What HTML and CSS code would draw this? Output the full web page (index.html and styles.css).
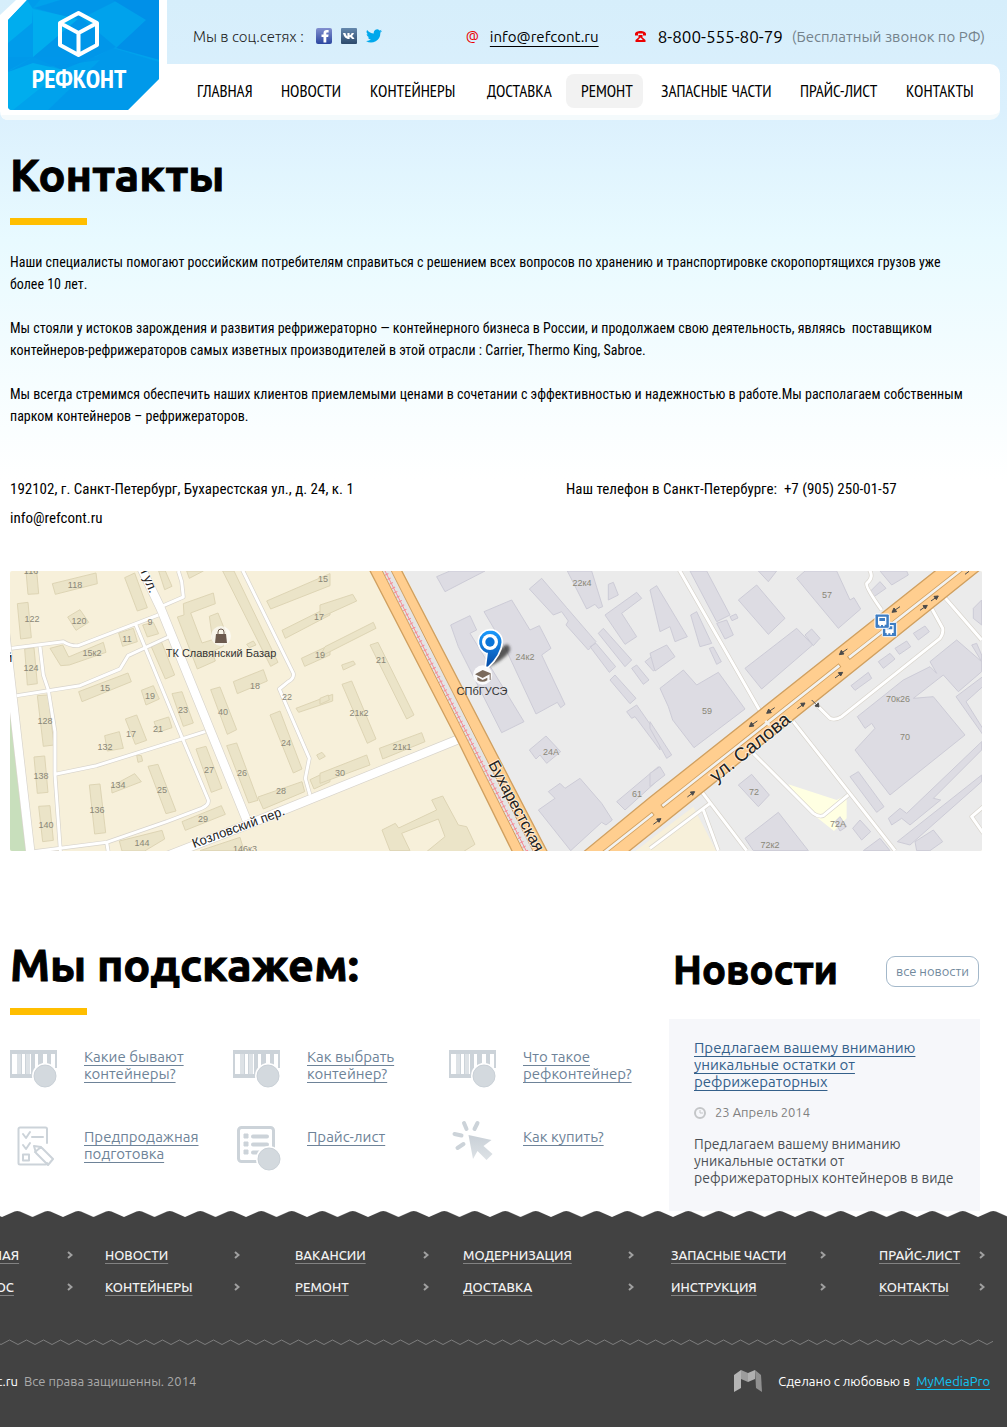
FILE: index.html
```html
<!DOCTYPE html>
<html lang="ru">
<head>
<meta charset="utf-8">
<meta name="viewport" content="width=device-width, initial-scale=1">
<title>Контакты — Рефконт</title>
<link rel="stylesheet" href="styles.css">
</head>
<body>

<svg class="sprite" width="0" height="0" aria-hidden="true">
  <defs>
    <linearGradient id="gray" x1="0" y1="0" x2="0" y2="1"><stop offset="0" stop-color="#c9d0d7"/><stop offset="1" stop-color="#dde2e6"/></linearGradient>
    <linearGradient id="fb" x1="0" y1="0" x2="0" y2="1"><stop offset="0" stop-color="#8290cf"/><stop offset="1" stop-color="#2b46a0"/></linearGradient>
    <linearGradient id="vk" x1="0" y1="0" x2="0" y2="1"><stop offset="0" stop-color="#6488ad"/><stop offset="1" stop-color="#2c4a6c"/></linearGradient>
    <linearGradient id="pin" x1="0" y1="0" x2="0" y2="1"><stop offset="0" stop-color="#1a9cff"/><stop offset="1" stop-color="#0549a4"/></linearGradient>
    <filter id="soft" x="-50%" y="-50%" width="200%" height="200%"><feGaussianBlur stdDeviation="5"/></filter>
  </defs>
  <symbol id="container" viewBox="0 0 47 38">
    <path fill="#ccd3d9" d="M0 0h47v18h-2V4h-4v12h-4V4h-4v9l-5 4V4h-3v22l-2 2H0zM2 4v20h5V4zM12 4v20h3V4zM20 4v20h1V4z" fill-rule="evenodd"/>
    <path fill="#dde2e6" d="M7 4h4v20H7zM16 4h4v20h-4z"/>
    <circle cx="35" cy="26" r="13" fill="#fff"/>
    <circle cx="35" cy="26" r="11" fill="#d3d9de" stroke="#c9d0d7"/>
  </symbol>
  <symbol id="checklist" viewBox="0 0 38 40">
    <g fill="none" stroke="#ccd3d9" stroke-width="2" stroke-linejoin="round" stroke-linecap="round">
      <path d="M30 17V3a1.500 1.500 0 0 0-1.500-1.500H3A1.500 1.500 0 0 0 1.500 3v34A1.500 1.500 0 0 0 3 38.500h25.500A1.500 1.500 0 0 0 30 37"/>
      <path d="M15 11h11M6 8l3 4 4-6M6 19l3 4 4-6M6 28.500h6v6H6z" />
      <path d="M17 20l7 1 12 12-5 6-12-12zM18 26l6-5"/>
    </g>
  </symbol>
  <symbol id="pricelist" viewBox="0 0 44 45">
    <rect x="1.500" y="1.500" width="35" height="34" rx="3" fill="none" stroke="#ccd3d9" stroke-width="3"/>
    <path d="M16 10.500h14M16 18.500h14M16 26.500h8" stroke="#ccd3d9" stroke-width="4" stroke-linecap="round"/>
    <path d="M7 8h4v4H7zM7 16h4v4H7zM7 24h4v4H7z" fill="#ccd3d9" stroke="#ccd3d9"/>
    <circle cx="32" cy="33" r="13" fill="#fff"/>
    <circle cx="32" cy="33" r="11" fill="#d3d9de" stroke="#c9d0d7"/>
  </symbol>
  <symbol id="click" viewBox="0 0 42 40">
    <path d="M16.500 15l23 5-8 6 9 8-6 6-9-9-4.500 8z" fill="url(#gray)"/>
    <path d="M12 3l2.500 6M25.500 3l-3 6M2.500 14l7 1.500M5.500 28l6-4" stroke="#ccd3d9" stroke-width="4" stroke-linecap="round"/>
  </symbol>
  <symbol id="chevron" viewBox="0 0 6 8"><path d="M1 1l3.500 3L1 7" fill="none" stroke="#a0a0a0" stroke-width="2"/></symbol>
</svg>

<div class="page">
  <header class="header">
    <a class="logo" href="#" aria-label="Рефконт">
      <svg class="logo-art" viewBox="0 0 167 120" aria-hidden="true">
        <path d="M16 0h151v120H9q-9 0-9-9V15z" fill="#fff"/>
        <path d="M1 115h166v5H9q-6 0-8-5z" fill="#f4fafc"/>
        <clipPath id="badge"><path d="M27 0h132v79l-31 31H12q-4 0-4-4V20z"/></clipPath>
        <g clip-path="url(#badge)">
          <path fill="#00a2ec" d="M0 0h167v120H0z"/>
          <path fill="#0090e8" d="M24 0l8 9 8-9zM8 20l25-11v48H8z" opacity=".3"/>
          <path fill="#0094e9" d="M34 8L60 0h58L78 20zM33 57L55 30l24-14 37 31-22 10-32 13z" opacity=".8"/>
          <path fill="#0090e8" d="M113 0h54v62l-51-14 30-28z"/>
          <path fill="#0096ea" d="M8 57h25l-25 14zM8 72l25-15 62 0 18-9 46 14v17l-31 31H48l52-50z" opacity=".7"/>
          <path fill="#00adee" d="M8 20L27 0l6 9-1 14-24 20zM33 9l45 10-45 38zM8 72l25-9 30 7-50 40H8z"/>
        </g>
        <g fill="none" stroke="#fff" stroke-width="4" stroke-linejoin="round">
          <path d="M78.500 13L97 23v22L78.500 55 60 45V23zM60 23l18.500 10L97 23M78.500 33v22"/>
        </g>
      </svg>
      <span class="logo-name">РЕФКОНТ</span>
    </a>
    <div class="header-body">
      <div class="topline">
        <span class="social-label">Мы в соц.сетях :</span>
        <span class="social">
          <a href="#" aria-label="Facebook"><svg width="16" height="16" viewBox="0 0 16 16"><rect width="16" height="16" rx="2" fill="url(#fb)"/><path fill="#fff" d="M7.500 14.500V9H5.500V6.500h2V5.200C7.500 3 8.800 2 10.600 2h2v2.400h-1.300c-.8 0-1 .4-1 1v1.100h2.300L12.200 9h-1.900v5.500z"/></svg></a>
          <a href="#" aria-label="ВКонтакте"><svg width="16" height="16" viewBox="0 0 16 16"><rect width="16" height="16" rx="1" fill="url(#vk)"/><path fill="#fff" d="M2 5h2.400c.5 1.700 1.300 3 2 3.400V5h2.200v2.300C9.600 7 10.200 6 10.700 5H13c-.4 1.200-1.200 2.300-2 3 1 .6 1.900 1.600 2.500 3H11c-.5-1-1.300-1.800-2.400-2v2H8C5 11 2.800 8.800 2 5z"/></svg></a>
          <a href="#" aria-label="Twitter"><svg width="16" height="14" viewBox="0 0 24 20"><path fill="#00a8ec" d="M24 2.400a10 10 0 0 1-2.800.8A5 5 0 0 0 23.300.5a10 10 0 0 1-3.100 1.200 4.900 4.900 0 0 0-8.400 4.500A14 14 0 0 1 1.700 1a4.900 4.900 0 0 0 1.500 6.600 5 5 0 0 1-2.200-.6c0 2.300 1.600 4.400 3.900 4.900a5 5 0 0 1-2.200.1 4.900 4.900 0 0 0 4.600 3.400A10 10 0 0 1 0 17.500a14 14 0 0 0 21.500-12.600A10 10 0 0 0 24 2.400z"/></svg></a>
        </span>
        <span class="at">@</span>
        <a class="mail" href="mailto:info@refcont.ru">info@refcont.ru</a>
        <svg class="phone-icon" width="11" height="11" viewBox="0 0 22 22" aria-hidden="true"><path fill="#ec0000" fill-rule="evenodd" d="M0 6c0-8 22-8 22 0v3h-6V5H6v4H0zM1 22v-4l6-5V8h8v5l6 5v4zm6-4h8v-1l-4-4-4 4z"/></svg>
        <a class="phone" href="tel:88005558079">8-800-555-80-79</a>
        <span class="free">(Бесплатный звонок по РФ)</span>
      </div>
      <nav class="nav">
        <a href="#">ГЛАВНАЯ</a>
        <a href="#">НОВОСТИ</a>
        <a href="#">КОНТЕЙНЕРЫ</a>
        <a href="#">ДОСТАВКА</a>
        <a class="active" href="#">РЕМОНТ</a>
        <a href="#">ЗАПАСНЫЕ ЧАСТИ</a>
        <a href="#">ПРАЙС-ЛИСТ</a>
        <a href="#">КОНТАКТЫ</a>
      </nav>
    </div>
  </header>

  <main class="main">
    <h1 class="title">Контакты</h1>
    <div class="intro">
      <p>Наши специалисты помогают российским потребителям справиться с решением всех вопросов по хранению и транспортировке скоропортящихся грузов уже<br>более 10 лет.</p>
      <p>Мы стояли у истоков зарождения и развития рефрижераторно — контейнерного бизнеса в России, и продолжаем свою деятельность, являясь &nbsp;поставщиком<br>контейнеров-рефрижераторов самых изветных производителей в этой отрасли : Carrier, Thermo King, Sabroe.</p>
      <p>Мы всегда стремимся обеспечить наших клиентов приемлемыми ценами в сочетании с эффективностью и надежностью в работе.Мы располагаем собственным<br>парком контейнеров – рефрижераторов.</p>
    </div>
    <address class="contacts">
      <div class="contacts-col">
        <span>192102, г. Санкт-Петербург, Бухарестская ул., д. 24, к. 1</span>
        <a class="contacts-mail" href="mailto:info@refcont.ru">info@refcont.ru</a>
      </div>
      <div class="contacts-col">
        <span>Наш телефон в Санкт-Петербурге: &nbsp;+7 (905) 250-01-57</span>
      </div>
    </address>

    <svg class="map" viewBox="0 0 972 280" preserveAspectRatio="xMidYMid slice" role="img" aria-label="Карта проезда">
      <rect width="972" height="280" fill="#f7f0da"/>
      <!-- west district -->
      <g transform="translate(-10 -6) scale(.33333)">
        <path fill="#c8dfbc" d="M30 440L52 640 78 860H30z"/>
        <path class="house" d="M78 18h32l6 68-32 2zM157 56l131-32 4 32-126 32zM203 156l37-22 26 38-38 24zM52 116l32-4 10 106-32 4zM74 252l28-4 10 108-30 4zM112 392l32-2 18 150-32 4zM102 576l32-3 10 109-32 3zM116 724l34-2 10 104-32 4zM268 660l32-3 17 146-33 4zM334 664l70-38 20 24-88 34zM314 512l44-12 12 50-48 8zM236 380l148-56 10 26-148 60zM150 250l38-10 18 36 104-44 8 30-110 38-26 2zM356 204l44-14 12 40-44 14zM428 180l32-8 16 34-34 10zM374 38l30-14 38 104-30 10zM376 462l34-12 30 76-34 12zM424 376l36-14 18 40-40 18zM462 470l44-14 10 32-42 14zM516 386l30-6 34 94-30 10zM450 236l34-6 40 100-28 12zM588 552l30-8 48 126-32 12zM444 604l30-6 54 140-30 8zM546 770l118-48 12 26-120 48zM358 828l128-32 8 26-60 36h-68zM774 696l132-46 8 30-124 52zM680 542l30-8 64 172-28 8zM632 374l28-8 50 128-28 14zM700 350l90-36 12 34-90 38zM532 156l20-6-2-34 90-32 6 32-74 28 34 90 32-10-10-70 26-10 24 60-8 40-34 16 10 28-54 24zM810 450l30-12 66 174-26 12zM888 430l110-42v20l-102 34zM800 108L990 26v36L812 132zM846 196l144-72v26L856 220zM904 280l86-40v30l-76 34zM668 18h34l132 274-22 12zM930 644l60-28v34l-48 22zM476 18h20l20 46-22 10zM560 18h50l-42 22zM950 570l16-8 10 12-18 10zM740 238l20-10 8 12-20 8zM410 570l14 2 4 16-14 4zM600 857l120-40 12 40z"/>
        <g class="road-edge">
          <path d="M35 250l155-20q25 15 45 12l240-92M490 122l60-26-5-46-10-32M50 392l190-30 120-50 24-40 121-56M120 245l10 85 15 45 20 125v130l17 240M407 178l141 344 77 183q3 15-20 25l-105 40-180 62-220 28M165 628l125-26 255-80 70-22M320 832l5 30M725 10l155 315q3 15-15 25l-27 22 90 208-12 60 14 50"/>
          <path class="wide" d="M410 -20L482 130 740 765M15 200L92 870M470 885L740 780l630-255"/>
        </g>
        <g class="road">
          <path d="M35 250l155-20q25 15 45 12l240-92M490 122l60-26-5-46-10-32M50 392l190-30 120-50 24-40 121-56M120 245l10 85 15 45 20 125v130l17 240M407 178l141 344 77 183q3 15-20 25l-105 40-180 62-220 28M165 628l125-26 255-80 70-22M320 832l5 30M725 10l155 315q3 15-15 25l-27 22 90 208-12 60 14 50"/>
          <path class="wide" d="M410 -20L482 130 740 765M15 200L92 870M470 885L740 780l630-255"/>
        </g>
      </g>
      <!-- industrial zone -->
      <g transform="translate(310 -6) scale(.33333)">
        <path fill="#ebebeb" d="M240 0h1760v870H680z"/>
        <path class="house" d="M0 120l98-32 12 20L0 158zM15 245l145-73 8 18L0 275zM150 240l24-8 108 218-22 12zM65 300l35-12 6 10-36 17zM66 358l29-10 73 174-26 13zM178 550l127-47 10 27-127 52zM0 625l140-55 10 30L0 655zM0 400l25-10 3 15-28 13zM186 795l40-20 10 14 114-54-15-30 33-12 47 87 25 5 25 53-35 22H320l55-45-20-53-110 43 25 52h-60z"/>
        <path class="plant" d="M350 35l40-17h105L375 80zM628 72l37-32 75 88 88 102-23 25-67-75 7-12-20-28-25 10zM742 18h73l33 107-13 5-10-12-25 14zM865 58l15-6 15 38-30 15zM855 150l95-68 15 18-60 45 45 70-35 23zM835 205l15-15 85 95-20 20zM810 245l18-10 59 70-19 17zM975 290l45-35v45l-20 18zM935 310l15-10 37 45-17 13zM870 345l15-15 63 70-18 16zM920 440l30-20 70 100v35l-75-100-10 5zM890 710l125-105 5 35-105 95zM492 140l83-35 55 90 28-13 35 68-28 20 70 148-13 10-10-16-64 35-93-200zM392 180l58-28 20 43-20 10 162 265-67 33L415 245zM628 555l50-42 44 47-42 35-20-25-12 12zM655 735l50-35-20-20 35-25 15 15 45-30 65 75 32 50-19 15-13-8-93 85z"/>
      </g>
      <g transform="translate(640 -6) scale(.33333)">
        <path fill="#f7f0da" d="M-60 870L130 725l75 145z"/>
        <path fill="#ffffe2" d="M415 658l145 47 30-15v70l-38 38-67-53z"/>
        <path class="plant" d="M0 75l20-13 92 153-37 15-15-45-30 15zM120 18h50l70 132-40 20zM122 150l18-10 45 95-35 10zM200 175l30-10 20 45-25 12zM240 155l18-8 6 12-18 8zM265 105l55-45 85 100-50 48zM440 40l25-22h95l40 87 12-7 20 34-67 58zM690 18h80l5 12-50 30zM660 80l30-30 18 20-36 25zM285 310l155-120 48 50-153 132zM465 210l20-18 25 28-20 22zM30 370l70-55 40 45 65-38 80 110-153 116-64-83-13-40zM0 265l50-25 25 35-60 43zM178 250l12-4 24 44-14 8zM0 470l65 100-15 10L0 490zM0 625l30-20 15 25-45 35zM265 660l40-32 53 62-33 35zM285 820l100-78 90 115H310zM790 205l35-22 13 17-33 25zM735 250l35-22 12 17-34 23zM685 290l35-25 15 17-35 28zM603 362l52-40 10 18-50 36zM622 455L760 345l80-40 20 20-20-35 80-65 75 65v30l-70 60-45-50-90 70 60-5 95 115-225 180-105-135 60-65-10-15-20 15zM600 635l25-15 77 105-22 17zM715 760l35-30 20 15 225-215v25L850 700l22 5-92 75-25-20-30 20zM742 830l253-200v20L780 840zM795 830l55-35 28 35-38 27h-40zM608 790l22-25 32 35-27 25zM555 770l15-15 20 30-20 13zM970 130l25-25v75l-25-20zM965 240l15-5 15 35v20zM640 857l50-37 30 37zM325 18h55l-25 32zM918 395l80-60v30l-50 45 50 80v18z"/>
        <path class="road-edge" d="M85 10l245 428M155 680l135 177M430 470l305 387M310 565l180 180q15 12 30 7l75-62M885 98l110 127M845 130l33 60q3 15-8 30L575 455q-20 12-35 5l-55-55M655 10q20 25-5 45-5 10 45 80M0 850l180-135M160 735l45 122M1000 725l-35 30 35 50"/>
        <path class="road" d="M85 10l245 428M155 680l135 177M430 470l305 387M310 565l180 180q15 12 30 7l75-62M885 98l110 127M845 130l33 60q3 15-8 30L575 455q-20 12-35 5l-55-55M655 10q20 25-5 45-5 10 45 80M0 850l180-135M160 735l45 122M1000 725l-35 30 35 50"/>
        <path class="highway" d="M-195 857L0 697 878 0h130L-80 872h-130z"/>
        <path d="M35 725L570 300M595 280L945 5M-150 872L10 745" stroke="#d0a060" stroke-width="13" fill="none"/>
        <path d="M37 723L568 302M597 278L945 5M-150 872L8 747M346 468l12 12" stroke="#f2f2f0" stroke-width="8" fill="none"/>
        <g stroke="#4b4b4b" stroke-width="3" fill="#4b4b4b">
          <path d="M750 125l-22 15M732 129l-6 13 14-2zM592 252l-22 15M574 256l-6 13 14-2zM374 428l-22 15M356 432l-6 13 14-2zM322 468l-22 15M304 472l-6 13 14-2z"/>
          <path d="M810 136l20-14M819 122l13-1-6 11zM843 108l20-14M852 94l13-1-6 11zM945 28l12-9M555 339l22-16M565 323l13-1-6 11zM442 431l22-16M452 415l13-1-6 11zM112 696l20-15M121 681l13-1-6 11zM10 778l22-16M20 762l13-1-6 11zM485 405l20 20M505 414l2 12-12-3z"/>
        </g>
        <g>
          <rect x="697" y="172" width="43" height="43" rx="4" fill="#3e7dc3" stroke="#fff" stroke-width="3"/>
          <path fill="#fff" fill-rule="evenodd" d="M706 180h25v24h-5v5h-5v-4h-6v4h-5v-5h-4zm4 4v9h17v-9z"/>
          <rect x="675" y="147" width="43" height="43" rx="4" fill="#3e7dc3" stroke="#fff" stroke-width="3"/>
          <path fill="#fff" fill-rule="evenodd" d="M684 155h25v24h-5v5h-5v-4h-6v4h-5v-5h-4zm4 4v9h17v-9z"/>
        </g>
      </g>
      <g transform="translate(310 -6) scale(.33333)">
        <path class="highway" d="M141 0h95l452 872H583L412 525z"/>
        <path fill="#e4e4e4" stroke="#d0a060" stroke-width="3" d="M178 0h27l441 872h-29z"/>
        <path d="M186 0l440 872" stroke="#f58c96" stroke-width="3" fill="none"/>
        <path d="M186 0l440 872" stroke="#f58c96" stroke-width="11" stroke-dasharray="3 12" fill="none"/>
        <path d="M500 308l30-50 30-20q22 12-4 36-24 22-56 34z" fill="#333" opacity=".8" filter="url(#soft)"/>
        <circle cx="488" cy="330" r="29" fill="#fff" opacity=".85"/>
        <path fill="#7a6a5c" d="M465 328l23-13 24 10v20h-3v-17l-21 11zM472 336l16 9 14-7v8q-14 9-30 0z"/>
        <path d="M510 194a37 37 0 0 0-10 72l1 0-5 40 8 2q40-38 43-76a37 37 0 0 0-37-38z" fill="url(#pin)" stroke="#fff" stroke-width="5"/>
        <circle cx="510" cy="231" r="24" fill="#fff"/>
        <circle cx="510" cy="231" r="14" fill="#0a74d8"/>
      </g>
      <g transform="translate(-10 -571)">
        <circle cx="221" cy="636" r="10" fill="#fff" opacity=".6"/>
        <path d="M216 634h10l1 9h-12z" fill="#6c5a4e"/><path d="M218 635v-3a3 3 0 0 1 6 0v3" fill="none" stroke="#6c5a4e"/>
        <g class="num">
          <text x="31" y="574">116</text><text x="75" y="588">118</text><text x="32" y="622">122</text><text x="79" y="624">120</text><text x="150" y="625">9</text><text x="127" y="642">11</text><text x="92" y="656">15к2</text><text x="31" y="671">124</text><text x="105" y="691">15</text><text x="150" y="699">19</text><text x="183" y="713">23</text><text x="223" y="715">40</text><text x="255" y="689">18</text><text x="287" y="700">22</text><text x="45" y="724">128</text><text x="131" y="737">17</text><text x="158" y="732">21</text><text x="105" y="750">132</text><text x="286" y="746">24</text><text x="209" y="773">27</text><text x="242" y="776">26</text><text x="41" y="779">138</text><text x="118" y="788">134</text><text x="162" y="793">25</text><text x="281" y="794">28</text><text x="97" y="813">136</text><text x="203" y="822">29</text><text x="46" y="828">140</text><text x="142" y="846">144</text><text x="245" y="852">146к3</text><text x="323" y="582">15</text><text x="319" y="620">17</text><text x="320" y="658">19</text><text x="381" y="663">21</text><text x="359" y="716">21к2</text><text x="402" y="750">21к1</text><text x="340" y="776">30</text><text x="582" y="586">22к4</text><text x="525" y="660">24к2</text><text x="551" y="755">24А</text><text x="637" y="797">61</text><text x="827" y="598">57</text><text x="707" y="714">59</text><text x="898" y="702">70к26</text><text x="905" y="740">70</text><text x="754" y="795">72</text><text x="838" y="827">72А</text><text x="770" y="848">72к2</text>
        </g>
        <g class="place"><text x="221" y="657">ТК Славянский Базар</text><text x="482" y="695">СПбГУСЭ</text></g>
        <g class="street">
          <text class="s13" transform="translate(139 568) rotate(67)">я ул.</text>
          <text class="s13" transform="translate(194 848) rotate(-20)">Козловский пер.</text>
          <text class="s16" transform="translate(488 764) rotate(62)">Бухарестская</text>
          <text class="s19" transform="translate(716 783) rotate(-39)">ул. Салова</text>
          <text class="s13" x="5" y="662">й</text>
        </g>
      </g>
    </svg>

    <div class="columns">
      <section class="advice">
        <h2 class="title">Мы подскажем:</h2>
        <ul class="advice-list">
          <li><span class="pic"><svg width="47" height="38"><use href="#container"/></svg></span><a href="#">Какие бывают<br>контейнеры?</a></li>
          <li><span class="pic"><svg width="47" height="38"><use href="#container"/></svg></span><a href="#">Как выбрать<br>контейнер?</a></li>
          <li><span class="pic"><svg width="47" height="38"><use href="#container"/></svg></span><a href="#">Что такое<br>рефконтейнер?</a></li>
          <li><span class="pic list-pic"><svg width="38" height="40"><use href="#checklist"/></svg></span><a href="#">Предпродажная<br>подготовка</a></li>
          <li><span class="pic price-pic"><svg width="44" height="45"><use href="#pricelist"/></svg></span><a href="#">Прайс-лист</a></li>
          <li><span class="pic click-pic"><svg width="42" height="40"><use href="#click"/></svg></span><a href="#">Как купить?</a></li>
        </ul>
      </section>
      <section class="news">
        <div class="news-head">
          <h2>Новости</h2>
          <button type="button" class="all-news">все новости</button>
        </div>
        <article class="news-card">
          <a class="news-link" href="#">Предлагаем вашему вниманию уникальные остатки от рефрижераторных</a>
          <div class="news-date">
            <svg width="12" height="12" viewBox="0 0 12 12" aria-hidden="true"><circle cx="6" cy="6" r="5" fill="none" stroke="#c4c6c8" stroke-width="2"/><path d="M6 3v3h3" fill="none" stroke="#c4c6c8"/></svg>
            <time datetime="2014-04-23">23 Апрель 2014</time>
          </div>
          <p>Предлагаем вашему вниманию<br>уникальные остатки от<br>рефрижераторных контейнеров в виде</p>
        </article>
      </section>
    </div>
  </main>

  <footer class="footer">
    <svg class="wave" width="100%" height="6" aria-hidden="true">
      <defs><pattern id="teeth" x="2" width="30.500" height="6" patternUnits="userSpaceOnUse"><path d="M0 6L12.500 .5Q15.250 -.5 18 .5L30.500 6z" fill="#424242"/></pattern></defs>
      <rect width="100%" height="6" fill="url(#teeth)"/>
    </svg>
    <div class="footer-body">
      <nav class="footer-nav">
        <a href="#">ГЛАВНАЯ</a><svg><use href="#chevron"/></svg>
        <a href="#">НОВОСТИ</a><svg><use href="#chevron"/></svg>
        <a href="#">ВАКАНСИИ</a><svg><use href="#chevron"/></svg>
        <a href="#">МОДЕРНИЗАЦИЯ</a><svg><use href="#chevron"/></svg>
        <a href="#">ЗАПАСНЫЕ ЧАСТИ</a><svg><use href="#chevron"/></svg>
        <a href="#">ПРАЙС-ЛИСТ</a><svg><use href="#chevron"/></svg>
        <a href="#">ВОПРОС</a><svg><use href="#chevron"/></svg>
        <a href="#">КОНТЕЙНЕРЫ</a><svg><use href="#chevron"/></svg>
        <a href="#">РЕМОНТ</a><svg><use href="#chevron"/></svg>
        <a href="#">ДОСТАВКА</a><svg><use href="#chevron"/></svg>
        <a href="#">ИНСТРУКЦИЯ</a><svg><use href="#chevron"/></svg>
        <a href="#">КОНТАКТЫ</a><svg><use href="#chevron"/></svg>
      </nav>
      <svg class="divider" height="7" aria-hidden="true">
        <defs><pattern id="zig" x="1" width="17" height="7" patternUnits="userSpaceOnUse"><path d="M-1 5L0 5.500 8.500 1 17 5.500l1-.5" fill="none" stroke="#7c7c7c"/></pattern></defs>
        <rect width="100%" height="7" fill="url(#zig)"/>
      </svg>
      <div class="footer-bottom">
        <span class="copy"><b>refcont.ru</b>Все права защишенны. 2014</span>
        <span class="made">
          <svg width="28" height="22" viewBox="0 0 28 22" aria-hidden="true"><path fill="#b4b4b4" d="M0 5l7-5v10v8l-7 4z"/><path fill="#9c9c9c" d="M7 0l7 3v9l-7-3z"/><path fill="#b0b0b0" d="M14 3l7-3v9l-7 3z"/><path fill="#909090" d="M21 0l6 5 1 17-6-4z"/></svg>
          <span>Сделано с любовью в</span>
          <a href="#">MyMediaPro</a>
        </span>
      </div>
    </div>
  </footer>
</div>
</body>
</html>
```
FILE: styles.css
```css
* { box-sizing: border-box; }

body {
  margin: 0;
  font-family: Ubuntu, "Noto Sans", "Open Sans", sans-serif;
  color: #000;
  background: #fff;
}

h1, h2, p, ul { margin: 0; padding: 0; }

h1, h2 { -webkit-text-stroke: 1px #000; }

.sprite { position: absolute; }

.page {
  overflow: hidden;
  background: linear-gradient(#d6eefb 0, #dbf0fd 110px, #e8faff 240px, #fff 480px);
}

/* header */

.header { display: flex; height: 120px; }

.logo {
  position: relative;
  flex: none;
  width: 167px;
  height: 120px;
  color: #fff;
  text-decoration: none;
}

.logo-art { display: block; width: 167px; height: 120px; }

.logo-name {
  position: absolute;
  left: 0;
  top: 63px;
  width: 158px;
  text-align: center;
  font: bold 26px/32px "PT Sans Narrow", "Roboto Condensed", "Noto Sans", sans-serif;
}

.header-body { flex: 1; min-width: 0; margin-right: 7px; }

.topline {
  display: flex;
  align-items: center;
  height: 64px;
  padding: 8px 15px 0 26px;
  white-space: nowrap;
}

.social-label { width: 123px; font-size: 15px; font-weight: 300; color: #222; }
.social { display: flex; align-items: center; gap: 9px; width: 150px; }
.social a { display: flex; }
.at { width: 24px; font-size: 14px; color: #ec0000; }
.mail { width: 145px; font-size: 15px; color: #000; text-underline-offset: 4px; }
.phone-icon { margin-right: 12px; }
.phone { width: 134px; font-size: 17px; color: #000; text-decoration: none; }
.free { font-size: 15px; color: #74828b; }

.nav {
  display: grid;
  grid-template-columns: 84fr 89fr 117fr 94fr 80fr 139fr 106fr 109fr;
  justify-items: start;
  height: 56px;
  padding: 10px 0 0 15px;
  border-bottom: 5px solid #f4fafc;
  border-radius: 0 10px 10px 0;
  background: #fff;
}

.nav a {
  height: 34px;
  padding: 0 10px 0 15px;
  border-radius: 8px;
  font: 17px/34px "PT Sans Narrow", "Roboto Condensed", "Noto Sans", sans-serif;
  color: #000;
  text-decoration: none;
  white-space: nowrap;
}

.nav .active { background: #f2f2f2; }

/* content */

.main { padding: 31px 25px 0 10px; }

.title { font-size: 45px; line-height: 48px; font-weight: bold; }

.title::after {
  content: "";
  display: block;
  width: 77px;
  height: 7px;
  margin-top: 19px;
  background: #ffbe00;
}

.intro {
  display: grid;
  gap: 22px;
  margin-top: 26px;
  font: 14px/22px "Roboto Condensed", Roboto, sans-serif;
  white-space: nowrap;
}

.contacts {
  display: grid;
  grid-template-columns: 556fr 416fr;
  margin-top: 51px;
  font: normal 15px/22px "Roboto Condensed", Roboto, sans-serif;
}

.contacts-col { display: flex; flex-direction: column; gap: 7px; }
.contacts-mail { color: #000; text-decoration: none; }

.map { display: block; width: 100%; height: 280px; margin-top: 42px; border-radius: 2px; }
.house { fill: #ebe4c8; stroke: #ddd4b4; stroke-width: 3; }
.plant { fill: #dddce3; stroke: #cccbd6; stroke-width: 3; }
.road, .road-edge { fill: none; stroke: #fff; stroke-width: 9; stroke-linejoin: round; }
.road-edge { stroke: #d8d4cc; stroke-width: 13; }
.road .wide { stroke-width: 25; }
.road-edge .wide { stroke-width: 29; }
.highway { fill: #ffce8f; stroke: #d0a060; stroke-width: 4; }
.num, .place, .street { font-family: "Liberation Sans", sans-serif; }
.num { font-size: 9px; fill: #8a8778; text-anchor: middle; }
.place { font-size: 11px; fill: #333; text-anchor: middle; }
.street { fill: #222; stroke: #fff; stroke-width: 2; stroke-opacity: .6; paint-order: stroke; }
.s13 { font-size: 13px; }
.s16 { font-size: 16px; }
.s19 { font-size: 19px; }

.columns { display: grid; grid-template-columns: 1fr 311px; margin: 90px 2px 0 0; }

.advice-list {
  display: grid;
  grid-template-columns: 223fr 216fr 220fr;
  grid-auto-rows: 80px;
  margin-top: 33px;
  list-style: none;
}

.advice-list li { display: flex; }
.advice-list a { font-size: 15px; line-height: 17px; color: #6e8398; white-space: nowrap; text-underline-offset: 3px; }
.pic { flex: none; width: 74px; padding-top: 2px; }
.list-pic { padding: 0 0 0 7px; margin-top: -2px; }
.price-pic { padding: 0 0 0 4px; margin-top: -2px; }
.click-pic { padding: 0 0 0 3px; margin-top: -8px; }

.news { display: flex; flex-direction: column; padding-top: 5px; }
.news-head { display: flex; justify-content: space-between; padding: 0 1px 0 4px; }
.news-head h2 { font-size: 40px; line-height: 48px; }

.all-news {
  width: 93px;
  height: 31px;
  margin-top: 10px;
  padding: 0 0 2px;
  border: 1px solid #a3b8ca;
  border-radius: 9px;
  background: #fff;
  font: 13px/16px Ubuntu, "Noto Sans", sans-serif;
  color: #70889c;
}

.news-card { flex: 1; margin-top: 25px; padding: 20px 24px 24px 25px; background: #f6f7fa; }
.news-link { display: block; font-size: 15px; line-height: 17px; color: #34608a; text-underline-offset: 3px; }
.news-date { display: flex; align-items: center; gap: 9px; margin: 14px 0 15px; font-size: 13px; line-height: 17px; color: #808080; }
.news-card p { font-size: 14px; line-height: 17px; color: #4a4f54; white-space: nowrap; }

/* footer */

.wave { display: block; }
.footer-body { height: 210px; padding-top: 30px; background: #424242; }

.footer-nav {
  display: grid;
  grid-template-columns: 107fr 38fr 129fr 61fr 128fr 40fr 165fr 43fr 149fr 59fr 100fr 6fr;
  row-gap: 16px;
  align-items: center;
  margin: 0 22px 0 -40px;
}

.footer-nav a {
  font-size: 13px;
  line-height: 16px;
  font-weight: 500;
  color: #f2f2f2;
  white-space: nowrap;
  text-decoration-color: #828282;
  text-decoration-thickness: 1px;
  text-underline-offset: 3px;
}

.footer-nav svg { display: block; width: 6px; height: 8px; }

.divider { display: block; width: calc(100% - 14px); margin-top: 44px; }

.footer-bottom {
  display: flex;
  align-items: center;
  justify-content: space-between;
  height: 40px;
  margin: 15px 17px 0 -47px;
  font-size: 13px;
  line-height: 16px;
}

.copy { color: #aaa; }
.copy b { display: inline-block; width: 65px; margin-right: 6px; font-weight: normal; text-align: right; color: #fff; }
.made { display: flex; align-items: center; gap: 6px; color: #fff; }
.made svg { margin-right: 10px; }
.made a { color: #10c4f4; text-underline-offset: 3px; }
```
